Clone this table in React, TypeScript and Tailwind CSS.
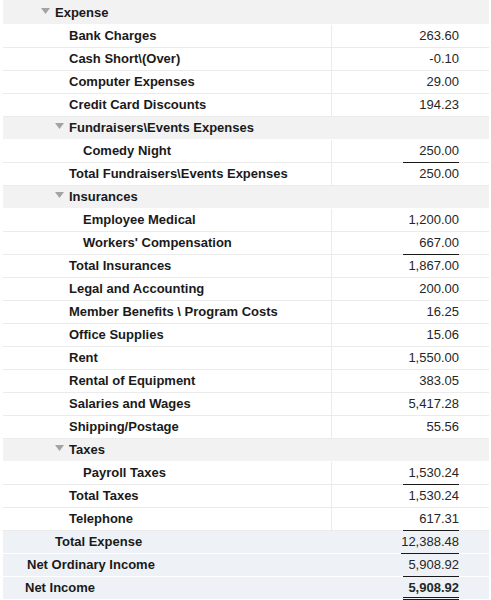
import React from 'react';

type Kind = 'group' | 'item' | 'summary';
type Line = 'none' | 'single' | 'double';

interface Row {
    label: string;
    amount?: string;
    kind: Kind;
    pad: string;
    line?: Line;
    bold?: boolean;
}

const ROWS: Row[] = [
    { label: 'Expense', kind: 'group', pad: 'pl-[38px]' },
    { label: 'Bank Charges', amount: '263.60', kind: 'item', pad: 'pl-[66px]' },
    { label: 'Cash Short\\(Over)', amount: '-0.10', kind: 'item', pad: 'pl-[66px]' },
    { label: 'Computer Expenses', amount: '29.00', kind: 'item', pad: 'pl-[66px]' },
    { label: 'Credit Card Discounts', amount: '194.23', kind: 'item', pad: 'pl-[66px]' },
    { label: 'Fundraisers\\Events Expenses', kind: 'group', pad: 'pl-[52px]' },
    { label: 'Comedy Night', amount: '250.00', kind: 'item', pad: 'pl-[80px]', line: 'single' },
    { label: 'Total Fundraisers\\Events Expenses', amount: '250.00', kind: 'item', pad: 'pl-[66px]' },
    { label: 'Insurances', kind: 'group', pad: 'pl-[52px]' },
    { label: 'Employee Medical', amount: '1,200.00', kind: 'item', pad: 'pl-[80px]' },
    { label: "Workers' Compensation", amount: '667.00', kind: 'item', pad: 'pl-[80px]', line: 'single' },
    { label: 'Total Insurances', amount: '1,867.00', kind: 'item', pad: 'pl-[66px]' },
    { label: 'Legal and Accounting', amount: '200.00', kind: 'item', pad: 'pl-[66px]' },
    { label: 'Member Benefits \\ Program Costs', amount: '16.25', kind: 'item', pad: 'pl-[66px]' },
    { label: 'Office Supplies', amount: '15.06', kind: 'item', pad: 'pl-[66px]' },
    { label: 'Rent', amount: '1,550.00', kind: 'item', pad: 'pl-[66px]' },
    { label: 'Rental of Equipment', amount: '383.05', kind: 'item', pad: 'pl-[66px]' },
    { label: 'Salaries and Wages', amount: '5,417.28', kind: 'item', pad: 'pl-[66px]' },
    { label: 'Shipping/Postage', amount: '55.56', kind: 'item', pad: 'pl-[66px]' },
    { label: 'Taxes', kind: 'group', pad: 'pl-[52px]' },
    { label: 'Payroll Taxes', amount: '1,530.24', kind: 'item', pad: 'pl-[80px]', line: 'single' },
    { label: 'Total Taxes', amount: '1,530.24', kind: 'item', pad: 'pl-[66px]' },
    { label: 'Telephone', amount: '617.31', kind: 'item', pad: 'pl-[66px]', line: 'single' },
    { label: 'Total Expense', amount: '12,388.48', kind: 'summary', pad: 'pl-[52px]', line: 'single' },
    { label: 'Net Ordinary Income', amount: '5,908.92', kind: 'summary', pad: 'pl-[24px]', line: 'single' },
    { label: 'Net Income', amount: '5,908.92', kind: 'summary', pad: 'pl-[22px]', line: 'double', bold: true },
];

function Caret() {
    return (
        <svg width="9" height="6" viewBox="0 0 9 6" className="mr-[5px] -mt-[5px] shrink-0">
            <path d="M0 0 L9 0 L4.5 6 Z" fill="#a3a3a3" />
        </svg>
    );
}

function ReportRow({ row, first }: { row: Row; first: boolean }) {
    const rowBg =
        row.kind === 'group'
            ? 'bg-[#f2f2f2] border-white'
            : row.kind === 'summary'
                ? 'bg-[#eef2f6] border-white'
                : 'bg-white border-[#ebebeb]';

    const underline =
        row.line === 'single'
            ? 'border-b border-[#1a1a1a]'
            : row.line === 'double'
                ? 'border-b-[3px] border-double border-[#1a1a1a]'
                : '';

    return (
        <div className={`flex border-b ${first ? 'h-[25px] pt-[2px]' : 'h-[23px]'} ${rowBg}`}>
            <div className={`flex-1 flex items-center ${row.pad} ${row.kind === 'item' ? 'border-r border-[#ebebeb]' : ''}`}>
                {row.kind === 'group' && <Caret />}
                <span className="text-[13px] font-bold text-[#1a1a1a] whitespace-nowrap">{row.label}</span>
            </div>
            <div className="w-[157px] flex justify-end pr-[30px]">
                {row.amount && (
                    <div className={`min-w-[56px] h-[23px] self-start text-right leading-[22px] text-[13px] text-[#262626] ${row.bold ? 'font-bold' : ''} ${underline}`}>
                        {row.amount}
                    </div>
                )}
            </div>
        </div>
    );
}

export default function App() {
    return (
        <div className="w-[491px] h-[600px] bg-white overflow-hidden font-['Liberation_Sans',Arial,sans-serif]">
            <div className="ml-[3px] w-[486px]">
                {ROWS.map((row, i) => (
                    <ReportRow key={i} row={row} first={i === 0} />
                ))}
            </div>
        </div>
    );
}
